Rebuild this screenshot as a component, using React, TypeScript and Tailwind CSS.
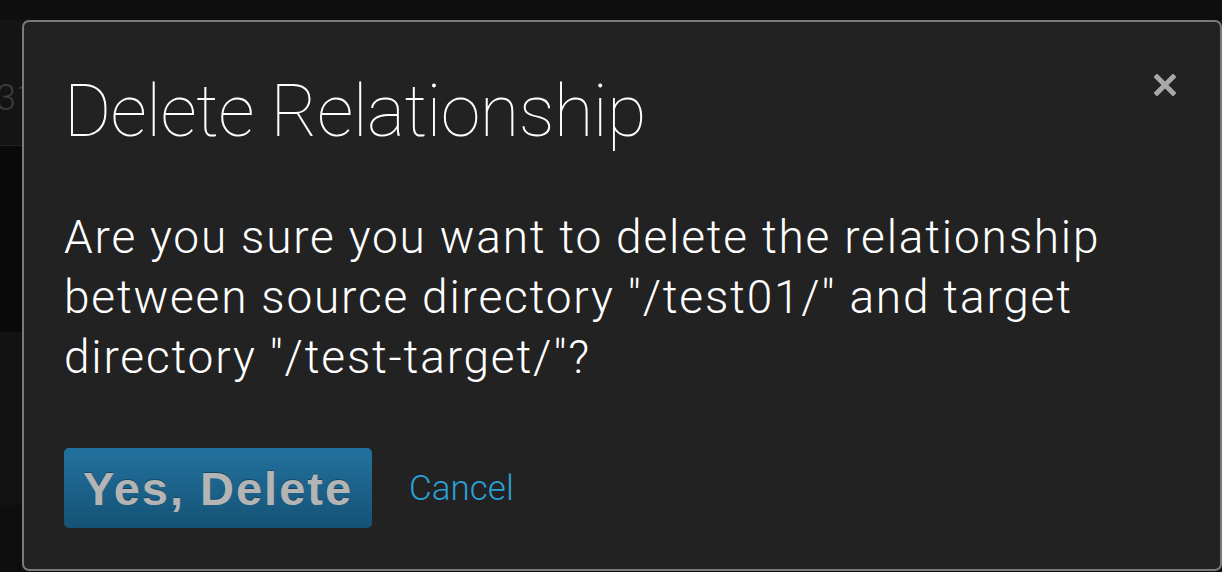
import React from "react";

export default function App() {
  return (
    <div className="relative w-[1222px] h-[572px] overflow-hidden bg-[#111111]" style={{ fontFamily: "Roboto, 'Liberation Sans', sans-serif" }}>
      {/* background page (under overlay) */}
      <div className="flex flex-col w-full h-full">
        <div className="h-[20px] bg-[#0f0f0f]" />
        <div className="h-[126px] bg-[#141414] border-b border-[#222222] flex items-center">
          <span className="ml-[-4px] mt-[30px] text-[36px] font-light leading-none text-[#3c3c3c]">31</span>
        </div>
        <div className="h-[186px] bg-[#0a0a0a]" />
        <div className="h-[173px] bg-[#121212]" />
        <div className="flex-1 bg-[#0e0e0e]" />
      </div>

      {/* modal */}
      <div className="absolute left-[22px] top-[20px] w-[1200px] h-[551px] rounded-[7px] border-2 border-[#7a7a7a] bg-[#222222] px-[40px]">
        <button className="absolute right-[44px] top-[52px] w-[22px] h-[22px]" aria-label="close">
          <svg width="22" height="22" viewBox="0 0 22 22">
            <path d="M3 3 L19 19 M19 3 L3 19" stroke="#a8a8a8" strokeWidth="5" strokeLinecap="square" />
          </svg>
        </button>
        <h3 className="mt-[50px] text-[72px] font-thin leading-[80px] text-white tracking-[-0.6px] whitespace-nowrap">
          Delete Relationship
        </h3>
        <div className="mt-[55px] text-[46px] font-light leading-[60px] text-white tracking-[1.8px] whitespace-nowrap">
          <div>Are you sure you want to delete the relationship</div>
          <div>between source directory "/test01/" and target</div>
          <div>directory "/test-target/"?</div>
        </div>
        <div className="mt-[61px] flex items-center gap-[37px]">
          <button
            className="w-[308px] h-[80px] rounded-[5px] bg-gradient-to-b from-[#22729e] to-[#155276] text-[#b4b4b4] text-[47px] font-bold leading-none tracking-[2px]"
            style={{ fontFamily: "'Liberation Sans', sans-serif", textShadow: "0 -1px 0 rgba(0,0,0,0.3)" }}
          >
            Yes, Delete
          </button>
          <span className="text-[35px] font-light text-[#2a9fd6] leading-none">Cancel</span>
        </div>
      </div>
    </div>
  );
}
